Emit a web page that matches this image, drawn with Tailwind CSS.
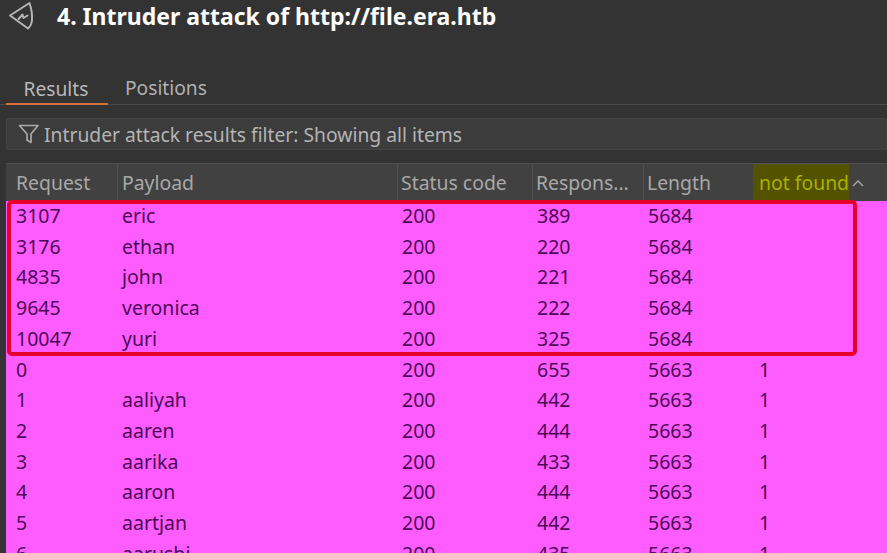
<!DOCTYPE html>
<html>
<head>
<meta charset="utf-8">
<script src="https://cdn.jsdelivr.net/npm/@tailwindcss/browser@4"></script>
</head>
<body class="m-0 bg-[#333333] overflow-hidden font-['Noto_Sans','Open_Sans',sans-serif]">
<div class="w-[887px] h-[553px] overflow-hidden flex flex-col bg-[#333333]">
  <!-- Title -->
  <div class="h-[36px] flex items-center pl-[8px] shrink-0">
    <svg class="w-[26px] h-[32px] -mt-[4px]" viewBox="0 0 26 32" fill="none" stroke="#b4b4b4" stroke-width="2" stroke-linejoin="round" stroke-linecap="round">
      <path d="M2 15.5 L21.5 3 Q24.5 12 24 20 Q23.5 25.5 20 28.5 Z"/>
      <path d="M10.5 19 L14.5 14.5 L15.5 18 L19.5 15.5"/>
    </svg>
    <span class="ml-[23px] -mt-[4px] text-[23px] font-bold text-white leading-none">4. Intruder attack of http://file.era.htb</span>
  </div>
  <!-- Tabs -->
  <div class="h-[69px] shrink-0 flex items-end pl-[6px] border-b border-[#4a4a4a]">
    <div class="w-[102px] h-[32px] flex justify-center pr-[2px] text-[19.2px] leading-[31px] text-[#b8b8b8] border-b-2 border-[#d0703c] -mb-px">Results</div>
    <div class="ml-[17px] h-[32px] text-[19.2px] leading-[31px] text-[#b0b0b0]">Positions</div>
  </div>
  <!-- Filter -->
  <div class="mt-[13px] ml-[6px] h-[32px] shrink-0 flex items-center bg-[#3c3c3c] border border-[#444444] rounded-[2px] pl-[11px]">
    <svg class="w-[22px] h-[20px]" viewBox="0 0 22 20" fill="none" stroke="#a8a8a8" stroke-width="1.7" stroke-linejoin="round">
      <path d="M1.5 1.5 H20 L13 10 V18.5 L9 16 V10 Z"/>
    </svg>
    <span class="ml-[4px] mt-[2px] text-[19.3px] leading-none text-[#b4b4b4]">Intruder attack results filter: Showing all items</span>
  </div>
  <!-- Table -->
  <div class="relative mt-[13px] ml-[6px] flex-1 min-h-0 overflow-hidden border-t border-[#505050]">
    <div class="h-[37px] grid grid-cols-[112px_280px_135px_111px_111px_1fr] bg-[#414141] text-[19.4px] text-[#a8a8a8] leading-[38px]">
      <div class="pl-[10px] border-r border-[#505050]">Request</div>
      <div class="pl-[4px] border-r border-[#505050]">Payload</div>
      <div class="pl-[3px] border-r border-[#505050]">Status code</div>
      <div class="pl-[3px] border-r border-[#505050] whitespace-nowrap overflow-hidden">Respons...</div>
      <div class="pl-[3px] border-r border-[#505050]">Length</div>
      <div class="flex items-center">
        <span class="-ml-[2px] pl-[6px] bg-[#525200] text-[#a8b000] w-[96px] h-full whitespace-nowrap">not found</span>
        <svg class="ml-[3px] w-[12px] h-[8px]" viewBox="0 0 12 8" fill="none" stroke="#a8a8a8" stroke-width="1.4"><path d="M1 7 L6 2 L11 7"/></svg>
      </div>
    </div>
    <div class="bg-[#ff5cff] text-[19.5px] text-[#4c0a56] [&>div]:h-[30.73px] [&>div]:leading-[30px] [&>div]:grid [&>div]:grid-cols-[112px_280px_135px_111px_111px_1fr] [&_span:nth-child(1)]:pl-[10px] [&_span:nth-child(2)]:pl-[4px] [&_span:nth-child(3)]:pl-[4px] [&_span:nth-child(4)]:pl-[4px] [&_span:nth-child(5)]:pl-[4px] [&_span:nth-child(6)]:pl-[4px]">
      <div><span>3107</span><span>eric</span><span>200</span><span>389</span><span>5684</span><span></span></div>
      <div><span>3176</span><span>ethan</span><span>200</span><span>220</span><span>5684</span><span></span></div>
      <div><span>4835</span><span>john</span><span>200</span><span>221</span><span>5684</span><span></span></div>
      <div><span>9645</span><span>veronica</span><span>200</span><span>222</span><span>5684</span><span></span></div>
      <div><span>10047</span><span>yuri</span><span>200</span><span>325</span><span>5684</span><span></span></div>
      <div><span>0</span><span></span><span>200</span><span>655</span><span>5663</span><span>1</span></div>
      <div><span>1</span><span>aaliyah</span><span>200</span><span>442</span><span>5663</span><span>1</span></div>
      <div><span>2</span><span>aaren</span><span>200</span><span>444</span><span>5663</span><span>1</span></div>
      <div><span>3</span><span>aarika</span><span>200</span><span>433</span><span>5663</span><span>1</span></div>
      <div><span>4</span><span>aaron</span><span>200</span><span>444</span><span>5663</span><span>1</span></div>
      <div><span>5</span><span>aartjan</span><span>200</span><span>442</span><span>5663</span><span>1</span></div>
      <div><span>6</span><span>aarushi</span><span>200</span><span>435</span><span>5663</span><span>1</span></div>
    </div>
    <div class="absolute left-[1px] top-[36px] w-[850px] h-[156px] border-4 border-[#e8002c] rounded-[5px]"></div>
  </div>
</div>
</body>
</html>
